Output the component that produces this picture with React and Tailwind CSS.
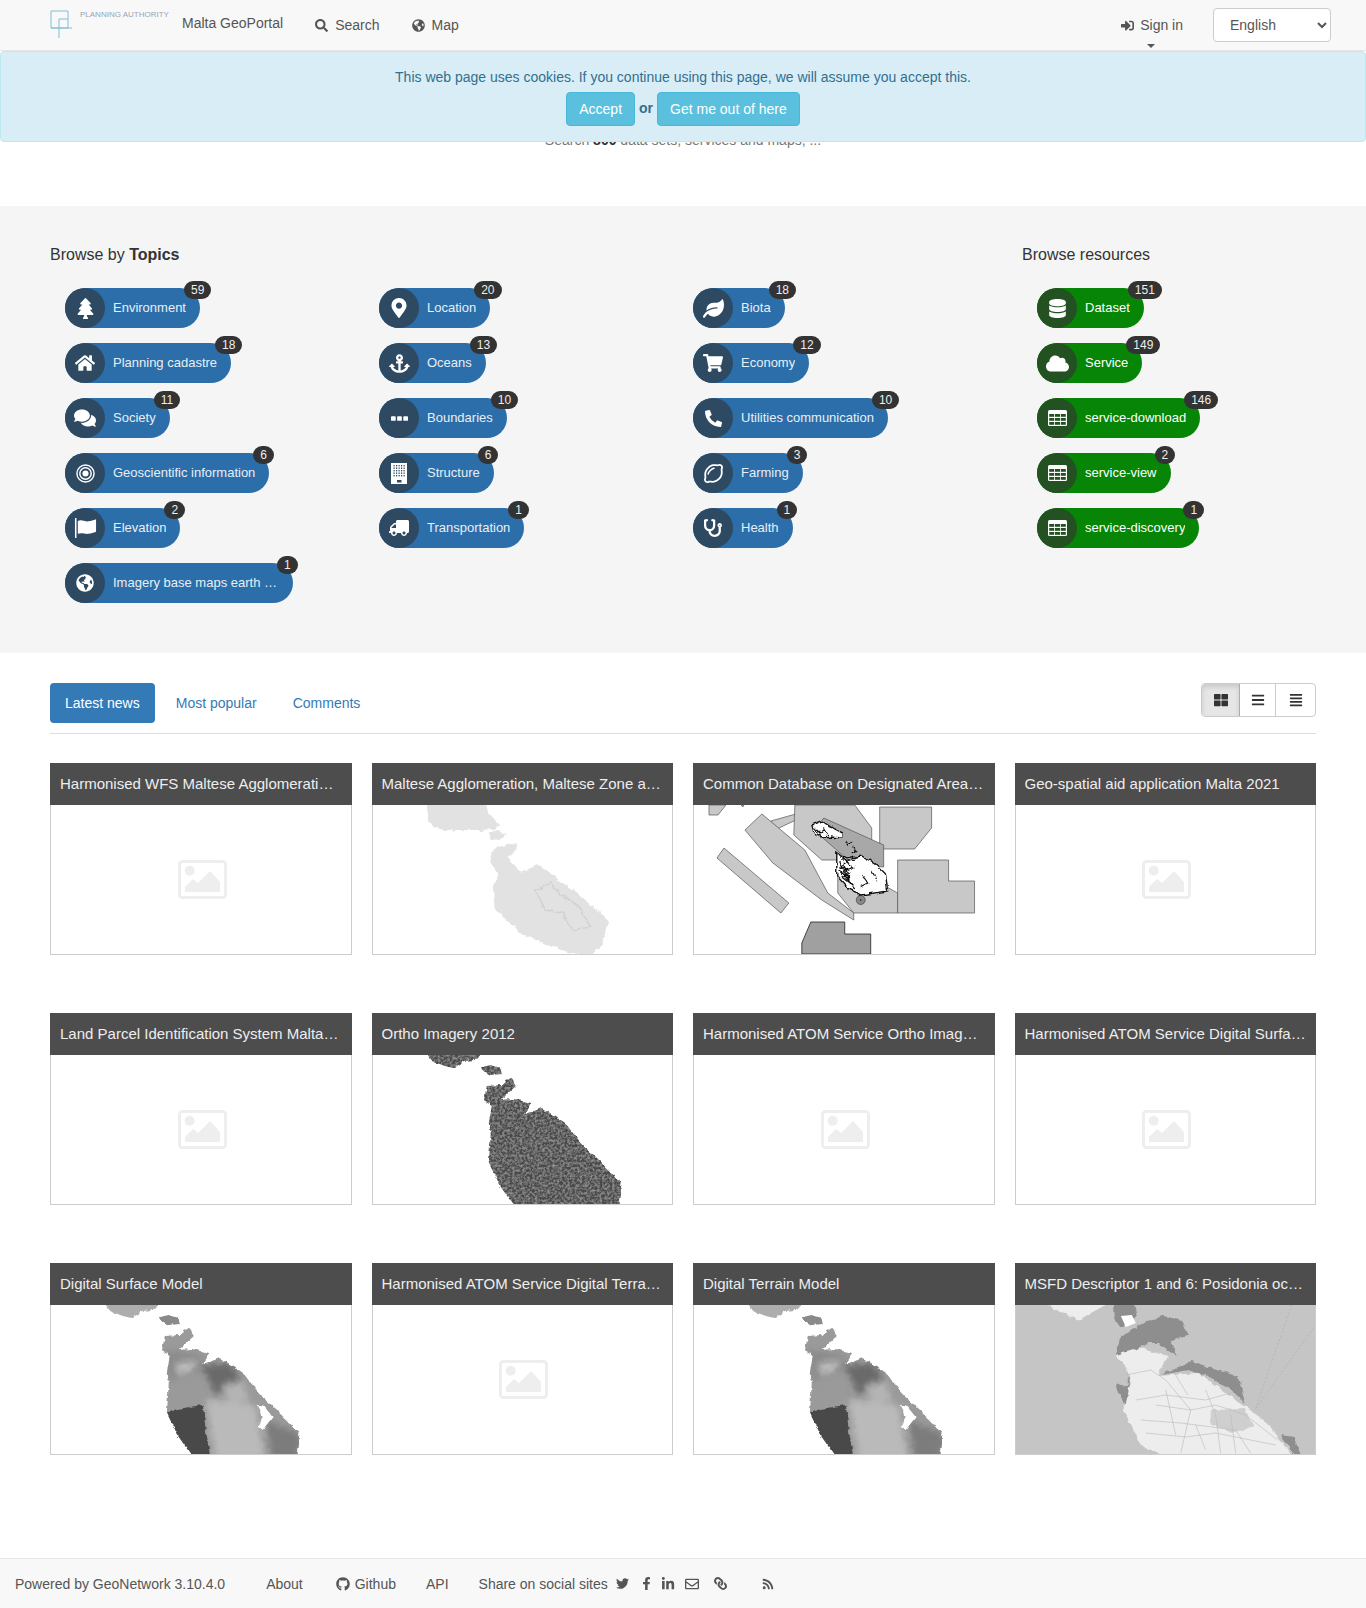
import { FaTree, FaHome, FaComments, FaGlobeAmericas, FaMapMarkerAlt, FaAnchor, FaTruck, FaLeaf, FaShoppingCart, FaPhoneAlt, FaRegLemon, FaStethoscope, FaDatabase, FaCloud, FaSearch, FaSignInAlt, FaThLarge, FaBars, FaAlignJustify, FaTwitter, FaFacebookF, FaLinkedinIn, FaRegEnvelope, FaLink, FaRss, FaGithub } from "react-icons/fa";

/* FA4 glyphs that the package draws differently */
const FlagIcon = () => (
  <svg viewBox="0 0 24 24" preserveAspectRatio="none" className="h-5 w-[23px] fill-white">
    <rect x="1" y="0" width="1.600" height="24" />
    <path d="M4 3.500c4-2 7 1 11 .5 3-.3 5-1.500 8-2.500v15c-3 1-5 2.200-8 2.500-4 .5-7-2-11 0z" />
  </svg>
);
const DotsIcon = () => (
  <svg viewBox="0 0 18 5" className="h-[5px] w-[17px] fill-white">
    <rect width="5" height="5" rx="1" />
    <rect x="6.500" width="5" height="5" rx="1" />
    <rect x="13" width="5" height="5" rx="1" />
  </svg>
);
const BuildingIcon = () => (
  <svg viewBox="0 0 16 21" className="h-[21px] w-4">
    <rect width="16" height="21" fill="#fff" />
    {[2, 4.500, 7, 9.500, 12].map(y =>
      [2.500, 5, 7.500, 10, 12.500].map(x => <rect key={x + "-" + y} x={x} y={y} width="1.200" height="1.400" fill="#2e4a63" />)
    )}
    <rect x="6" y="17" width="4.500" height="2.500" fill="#2e4a63" />
  </svg>
);
const BullseyeIcon = () => (
  <svg viewBox="0 0 20 20" className="h-[19px] w-[19px] fill-none stroke-white">
    <circle cx="10" cy="10" r="9" strokeWidth="1.500" />
    <circle cx="10" cy="10" r="6" strokeWidth="1.500" />
    <circle cx="10" cy="10" r="3.200" fill="#fff" stroke="none" />
  </svg>
);
const TableIcon = () => (
  <svg viewBox="0 0 19 16" className="h-4 w-[19px]">
    <rect width="19" height="16" rx="1.500" fill="#fff" />
    {[4, 8, 12].map(y =>
      [1.200, 7, 12.800].map(x => <rect key={x + "-" + y} x={x} y={y} width="5" height="2.800" fill="#235122" />)
    )}
  </svg>
);
const PictureIcon = () => (
  <svg viewBox="0 0 49 39" className="h-[39px] w-[49px]">
    <rect x="1.500" y="1.500" width="46" height="36" rx="3" fill="none" stroke="#eeeeee" strokeWidth="3" />
    <circle cx="11.700" cy="10.700" r="5" fill="#eeeeee" />
    <path d="M7 32 L7 27 L15 19 L20 23 L32 11 L42 22 L42 32 Z" fill="#eeeeee" />
  </svg>
);

const topics = [
  [
    { label: "Environment", count: 59, icon: <FaTree size={21} /> },
    { label: "Planning cadastre", count: 18, icon: <FaHome size={20} /> },
    { label: "Society", count: 11, icon: <FaComments size={22} /> },
    { label: "Geoscientific information", count: 6, icon: <BullseyeIcon /> },
    { label: "Elevation", count: 2, icon: <FlagIcon /> },
    { label: "Imagery base maps earth cover", count: 1, icon: <FaGlobeAmericas size={18} /> },
  ],
  [
    { label: "Location", count: 20, icon: <FaMapMarkerAlt size={20} /> },
    { label: "Oceans", count: 13, icon: <FaAnchor size={21} /> },
    { label: "Boundaries", count: 10, icon: <DotsIcon /> },
    { label: "Structure", count: 6, icon: <BuildingIcon /> },
    { label: "Transportation", count: 1, icon: <FaTruck size={20} className="-scale-x-100" /> },
  ],
  [
    { label: "Biota", count: 18, icon: <FaLeaf size={21} /> },
    { label: "Economy", count: 12, icon: <FaShoppingCart size={20} /> },
    { label: "Utilities communication", count: 10, icon: <FaPhoneAlt size={17} /> },
    { label: "Farming", count: 3, icon: <FaRegLemon size={19} /> },
    { label: "Health", count: 1, icon: <FaStethoscope size={18} /> },
  ],
];

const resources = [
  { label: "Dataset", count: 151, icon: <FaDatabase size={19} /> },
  { label: "Service", count: 149, icon: <FaCloud size={23} /> },
  { label: "service-download", count: 146, icon: <TableIcon /> },
  { label: "service-view", count: 2, icon: <TableIcon /> },
  { label: "service-discovery", count: 1, icon: <TableIcon /> },
];

const cards = [
  { title: "Harmonised WFS Maltese Agglomeration and Zone", thumb: "none" },
  { title: "Maltese Agglomeration, Maltese Zone and Sub-Zones", thumb: "light" },
  { title: "Common Database on Designated Areas Malta", thumb: "cdda" },
  { title: "Geo-spatial aid application Malta 2021", thumb: "none" },
  { title: "Land Parcel Identification System Malta 2020", thumb: "none" },
  { title: "Ortho Imagery 2012", thumb: "ortho" },
  { title: "Harmonised ATOM Service Ortho Imagery 2012", thumb: "none" },
  { title: "Harmonised ATOM Service Digital Surface Model", thumb: "none" },
  { title: "Digital Surface Model", thumb: "dsm" },
  { title: "Harmonised ATOM Service Digital Terrain Model", thumb: "none" },
  { title: "Digital Terrain Model", thumb: "dsm" },
  { title: "MSFD Descriptor 1 and 6: Posidonia oceanica", thumb: "msfd" },
];

const gozoB = "M53,-4 L114,-4 L101,5 L92,6 L81,13 L72,11 L59,6 Z";
const cominoB = "M109,12 L118,10 L128,13 L129,19 L118,20 L111,16 Z";
const maltaB = "M114,31 L128,30 L138,23 L143,31 L128,45 L142,44 L159,48 L151,60 L169,53 L194,70 L206,85 L218,98 L235,114 L249,128 L245,156 L145,156 L128,132 L116,108 L118,78 L116,68 L119,51 L111,46 Z";

function Thumb({ kind }) {
  if (kind === "none") {
    return (
      <div className="flex h-full items-center justify-center pl-[3px]">
        <PictureIcon />
      </div>
    );
  }
  return (
    <svg viewBox="0 0 300 149" preserveAspectRatio="none" className="block h-full w-full">
      <defs>
        <filter id="soft"><feGaussianBlur stdDeviation="0.500" /></filter>
        <filter id="softer"><feGaussianBlur stdDeviation="3" /></filter>
        <filter id="rough" x="-5%" y="-5%" width="110%" height="110%">
          <feTurbulence type="fractalNoise" baseFrequency="0.16" numOctaves="2" seed="3" result="n" />
          <feDisplacementMap in="SourceGraphic" in2="n" scale="5" xChannelSelector="R" yChannelSelector="G" />
          <feGaussianBlur stdDeviation="0.500" />
        </filter>
        <filter id="ortho" x="-5%" y="-5%" width="110%" height="110%">
          <feTurbulence type="fractalNoise" baseFrequency="0.16" numOctaves="2" seed="3" result="n" />
          <feDisplacementMap in="SourceGraphic" in2="n" scale="5" xChannelSelector="R" yChannelSelector="G" result="d" />
          <feTurbulence type="fractalNoise" baseFrequency="0.4" numOctaves="3" seed="8" />
          <feColorMatrix values="0 0 0 0 0.62  0 0 0 0 0.62  0 0 0 0 0.62  0.900 0 0 0 -0.330" result="g" />
          <feComposite in="g" in2="d" operator="in" result="gg" />
          <feMerge result="m"><feMergeNode in="d" /><feMergeNode in="gg" /></feMerge>
          <feGaussianBlur in="m" stdDeviation="0.700" />
        </filter>
        <clipPath id="isle"><path d={maltaB} /></clipPath>
      </defs>
      {kind === "light" && (
        <g fill="#e2e2e2" filter="url(#rough)">
          <path d="M55,-4 L110,-4 L116,8 L127,20 L122,24 L108,25 L85,25 L73,26 L62,22 L55,15 Z" />
          <path d="M116,28 L124,25 L133,30 L128,35 L118,34 Z" />
          <path d="M120,43 L143,38 L144,46 L135,53 L149,68 L163,60 L167,60 L200,85 L236,115 L229,141 L216,152 L188,145 L151,130 L122,105 L120,81 L126,70 L117,55 Z" />
          <path d="M163,85 L178,78 L188,90 L205,100 L218,122 L200,125 L190,108 L172,105 Z" fill="none" stroke="#d2d2d2" strokeWidth="1.500" />
        </g>
      )}
      {kind === "cdda" && (
        <g>
          <g fill="#c8c8c8" stroke="#555" strokeWidth="0.700">
            <path d="M15,0 L32,0 L24,10 L15,10 Z" />
            <path d="M47,0 L50,0 L49,2 Z" />
            <path d="M77,16 L134,0 L83,24 Z" />
            <path d="M30,43 L95,98 L87,108 L23,53 Z" />
            <path d="M144,55 L204,88 L204,108 L160,108 L144,88 Z" />
            <path d="M51,25 L68,9 L111,45 L134,88 L160,108 L160,115 L128,95 L79,58 Z" />
            <path d="M101,0 L161,0 L178,23 L178,55 L128,55 L100,30 Z" />
            <path d="M186,2 L238,2 L238,23 L221,44 L186,44 Z" />
            <path d="M204,55 L255,55 L255,76 L281,76 L281,108 L204,108 Z" />
          </g>
          <path d="M130,13 L190,40 L190,62 L160,60 L120,25 Z" fill="#a8a8a8" stroke="#555" strokeWidth="0.700" />
          <path d="M117,117 L151,117 L151,129 L177,129 L177,149 L108,149 L108,138 Z" fill="#a0a0a0" stroke="#222" strokeWidth="0.800" />
          <circle cx="167" cy="95" r="4.500" fill="#888" stroke="#444" strokeWidth="0.700" />
          <circle cx="167" cy="95" r="0.800" fill="#111" />
          <g filter="url(#rough)">
            <g fill="#fff" stroke="#111" strokeWidth="1.400">
              <path d="M118,20 L128,16 L140,24 L148,28 L148,33 L137,32 L130,33 L120,27 Z" />
              <path d="M143,48 L152,54 L168,51 L180,58 L192,70 L194,86 L168,90 L155,84 L143,71 Z" />
            </g>
            <path d="M120,22 L126,28 L130,24 L134,31 M152,36 L155,40 L158,37 M159,42 L163,46 L159,48 M145,50 L153,58 L147,62 L156,68 L148,72 L158,80 L150,66 L160,62 L152,56 L162,54 M146,56 L156,74 L146,66 L162,84 M178,66 L184,76 M168,70 L174,78 L166,82" fill="none" stroke="#111" strokeWidth="1.200" />
          </g>
        </g>
      )}
      {kind === "ortho" && (
        <g fill="#4a4a4a" filter="url(#ortho)">
          <path d={gozoB} />
          <path d={cominoB} />
          <path d={maltaB} />
        </g>
      )}
      {kind === "dsm" && (
        <g filter="url(#rough)">
          <path d={gozoB} fill="#adadad" />
          <path d={cominoB} fill="#8a8a8a" />
          <path d={maltaB} fill="#9a9a9a" />
          <g clipPath="url(#isle)">
            <g filter="url(#softer)">
              <path d="M115,45 L150,50 L150,66 L118,76 Z" fill="#8a8a8a" />
              <path d="M125,58 L148,56 L140,66 L127,70 Z" fill="#bdbdbd" />
              <path d="M150,60 L180,58 L190,75 L165,90 Z" fill="#6a6a6a" />
              <path d="M172,80 L192,76 L198,96 L178,100 Z" fill="#b4b4b4" />
              <path d="M155,95 L205,100 L215,156 L165,156 Z" fill="#bababa" />
              <path d="M215,115 L250,130 L245,156 L222,156 Z" fill="#7c7c7c" />
            </g>
            <path d="M116,108 L126,104 L152,100 L155,125 L160,156 L140,156 L125,130 Z" fill="#484848" filter="url(#soft)" />
            <path d="M206,100 L214,102 L222,112 L212,125 L206,122 L212,112 Z" fill="#fff" />
          </g>
        </g>
      )}
      {kind === "msfd" && (
        <g>
          <rect width="300" height="149" fill="#c5c5c5" />
          <g fill="#ededed" filter="url(#rough)">
            <path d="M28,-3 L95,-3 L75,8 L63,15 L42,6 Z" />
            <path d="M100,51 L118,41 L152,51 L142,71 L182,68 L225,98 L252,118 L278,153 L152,153 L125,141 L108,105 L115,78 L110,60 Z" />
          </g>
          <g fill="#8e8e8e" filter="url(#rough)">
            <path d="M97,-3 L117,-3 L122,11 L105,23 L98,13 Z" />
            <path d="M105,31 L132,15 L148,11 L167,16 L172,31 L155,36 L162,51 L142,38 L132,38 L118,45 L100,50 Z" />
            <path d="M145,70 L175,56 L202,65 L222,71 L230,98 L215,85 L192,71 L172,65 Z" />
            <path d="M100,78 L112,82 L112,70 L114,78 L110,100 L104,90 Z" />
            <path d="M265,130 L278,132 L285,149 L278,149 Z" />
          </g>
          <path d="M105,11 L116,10 L120,18 L110,22 Z" fill="#fff" filter="url(#soft)" />
          <g fill="none" stroke="#aeaeae" strokeWidth="0.500">
            <path d="M110,70 L135,65 L150,75 L175,105 L200,100 L230,110 L262,135 M140,100 L175,105 L165,148 M125,115 L165,118 L220,125 L235,148 M190,85 L200,110 L205,148 M150,85 L160,130 M120,95 L150,90 L190,95 L215,88 M130,128 L170,132 L200,128 L260,140 M180,120 L190,145 M215,110 L220,148 M160,70 L172,90" />
          </g>
          <path d="M276,0 L240,104 M300,20 L240,104" fill="none" stroke="#aaa" strokeWidth="0.600" strokeDasharray="2 2" />
          <path d="M195,105 L228,104 L240,122 L215,128 L195,118 Z" fill="#bcbcbc" opacity="0.600" filter="url(#rough)" />
        </g>
      )}
    </svg>
  );
}

function Pill({ item, green }) {
  return (
    <div className={`relative mb-[15px] flex h-10 w-fit items-center rounded-full pr-[14px] text-[13px] ${green ? "bg-[#078507] text-white" : "bg-[#2c6ea9] text-[#e8eef5]"}`}>
      <span className={`mr-2 flex h-10 w-10 shrink-0 items-center justify-center rounded-full text-white ${green ? "bg-[#235122]" : "bg-[#2e4a63]"}`}>
        {item.icon}
      </span>
      <span className="max-w-[166px] truncate">{item.label}</span>
      <span className="absolute left-[calc(100%-16px)] top-[-7px] rounded-[10px] bg-[#333333] px-[7px] py-[3px] text-[12px] leading-3 text-[#eeeeee]">
        {item.count}
      </span>
    </div>
  );
}

export default function App() {
  return (
    <div className="relative min-h-[1608px] bg-white font-['Liberation_Sans',Arial,sans-serif] text-sm text-[#333333]">
      {/* Navbar */}
      <header className="flex h-[51px] items-center border-b border-[#e7e7e7] bg-[#f8f8f8] pl-[50px] pr-[35px] text-[#555555]">
        <div className="relative h-full w-[132px]">
          <svg viewBox="0 0 24 28" className="absolute left-0 top-[10px] h-7 w-6 fill-none stroke-[#7fc0d6]">
            <path d="M1 1 H18 V18 H1 Z M9 9 H18 M9 9 V28 M1 18 H22" strokeWidth="1" />
          </svg>
          <span className="absolute left-[30px] top-[10px] whitespace-nowrap text-[8px] leading-[10px] text-[#9aa3b3]">PLANNING AUTHORITY</span>
        </div>
        <span className="relative top-[-2px]">Malta GeoPortal</span>
        <span className="ml-8 flex items-center gap-[7px]"><FaSearch size={13} />Search</span>
        <span className="ml-8 flex items-center gap-[7px]"><FaGlobeAmericas size={13} />Map</span>
        <span className="relative ml-auto flex items-center gap-[6px]">
          <FaSignInAlt size={13} />Sign in
          <span className="absolute left-[26px] top-[29px] h-0 w-0 border-x-4 border-t-4 border-x-transparent border-t-[#555555]" />
        </span>
        <select className="ml-[30px] h-[34px] w-[118px] rounded border border-[#cccccc] bg-white px-3 text-[#555555]" defaultValue="English">
          <option>English</option>
        </select>
      </header>

      {/* Cookie notice, lies over the hero */}
      <div className="absolute inset-x-0 top-[51px] z-10 h-[91px] rounded border border-[#bce8f1] bg-[#d9edf7] pt-[15px] text-center text-[#31708f]">
        <p className="leading-5">This web page uses cookies. If you continue using this page, we will assume you accept this.</p>
        <div className="mt-[5px] flex items-center justify-center gap-[3px]">
          <button className="h-[34px] rounded border border-[#46b8da] bg-[#5bc0de] px-3 text-white">Accept</button>
          <b className="relative top-[-1px] px-[1px]">or</b>
          <button className="h-[34px] rounded border border-[#46b8da] bg-[#5bc0de] px-3 text-white">Get me out of here</button>
        </div>
      </div>

      {/* Hero */}
      <div className="flex h-[155px] items-start justify-center pt-[79px] text-[#777777]">
        <p className="leading-5">Search <b className="text-[#333333]">800</b> data sets, services and maps, ...</p>
      </div>

      {/* Browse */}
      <section className="flex h-[447px] bg-[#f5f5f5] pl-[50px] pt-[38px]">
        <div className="w-[972px]">
          <h2 className="mb-[22px] text-base leading-[22px]">Browse by <b>Topics</b></h2>
          <div className="grid grid-cols-[314px_314px_314px] pl-[15px]">
            {topics.map((col, i) => (
              <div key={i}>
                {col.map(t => <Pill key={t.label} item={t} />)}
              </div>
            ))}
          </div>
        </div>
        <div>
          <h2 className="mb-[22px] text-base leading-[22px]">Browse resources</h2>
          <div className="pl-[15px]">
            {resources.map(r => <Pill key={r.label} item={r} green />)}
          </div>
        </div>
      </section>

      {/* Latest */}
      <section className="px-[50px] pt-[30px]">
        <div className="flex items-start border-b border-[#dddddd] pb-[10px]">
          <a className="rounded bg-[#337ab7] px-[15px] py-[10px] leading-5 text-white">Latest news</a>
          <a className="ml-[6px] px-[15px] py-[10px] leading-5 text-[#337ab7]">Most popular</a>
          <a className="ml-[6px] px-[15px] py-[10px] leading-5 text-[#337ab7]">Comments</a>
          <div className="ml-auto flex h-[34px] w-[115px] rounded border border-[#cccccc] text-[#333333]">
            <span className="flex w-[38px] items-center justify-center rounded-l border-r border-[#adadad] bg-[#e6e6e6] shadow-[inset_0_3px_5px_rgba(0,0,0,0.125)]"><FaThLarge size={14} /></span>
            <span className="flex w-9 items-center justify-center border-r border-[#cccccc]"><FaBars size={14} /></span>
            <span className="flex flex-1 items-center justify-center"><FaAlignJustify size={14} /></span>
          </div>
        </div>
        <div className="mt-[29px] grid grid-cols-4 gap-x-5 gap-y-[58px]">
          {cards.map((c, i) => (
            <div key={i}>
              <div className="flex h-[42px] items-center bg-[#4d4d4d] px-[10px] text-[15px] text-[#eeeeee]">
                <span className="truncate">{c.title}</span>
              </div>
              <div className="h-[150px] border border-t-0 border-[#cccccc]">
                <Thumb kind={c.thumb} />
              </div>
            </div>
          ))}
        </div>
      </section>

      {/* Footer */}
      <footer className="absolute inset-x-0 bottom-0 flex h-[50px] items-center border-t border-[#e7e7e7] bg-[#f8f8f8] pl-[15px] text-[#555555]">
        <span>Powered by GeoNetwork 3.10.4.0</span>
        <span className="ml-[41px]">About</span>
        <span className="ml-[33px] flex items-center gap-[5px]"><FaGithub size={14} />Github</span>
        <span className="ml-[30px]">API</span>
        <span className="ml-[30px]">Share on social sites</span>
        <span className="ml-[8px] flex items-center">
          <FaTwitter size={13} />
          <FaFacebookF size={13} className="ml-[11px]" />
          <FaLinkedinIn size={14} className="ml-[8px]" />
          <FaRegEnvelope size={14} className="ml-[10px]" />
          <FaLink size={13} className="ml-[15px] -scale-x-100" />
          <FaRss size={12} className="ml-[35px]" />
        </span>
      </footer>
    </div>
  );
}
